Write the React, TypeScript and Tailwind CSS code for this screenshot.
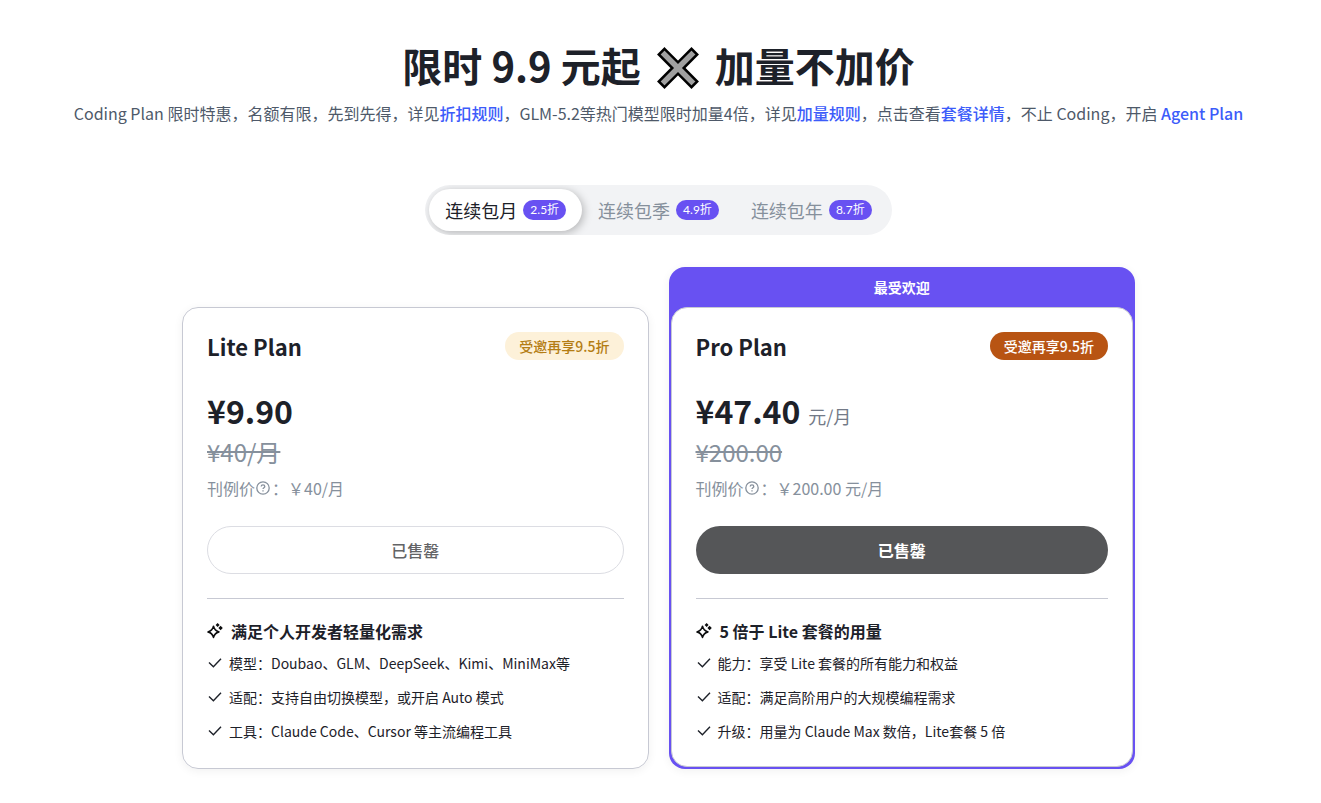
import { useState } from "react";
import clsx from "clsx";

const periods = [
  { id: "month", label: "连续包月", discount: "2.5折" },
  { id: "quarter", label: "连续包季", discount: "4.9折" },
  { id: "year", label: "连续包年", discount: "8.7折" },
];

const plans = [
  {
    name: "Lite Plan",
    price: "¥9.90",
    unit: "",
    original: "¥40/月",
    listPrice: "￥40/月",
    summary: "满足个人开发者轻量化需求",
    features: [
      "模型：Doubao、GLM、DeepSeek、Kimi、MiniMax等",
      "适配：支持自由切换模型，或开启 Auto 模式",
      "工具：Claude Code、Cursor 等主流编程工具",
    ],
    popular: false,
  },
  {
    name: "Pro Plan",
    price: "¥47.40",
    unit: "元/月",
    original: "¥200.00",
    listPrice: "￥200.00 元/月",
    summary: "5 倍于 Lite 套餐的用量",
    features: [
      "能力：享受 Lite 套餐的所有能力和权益",
      "适配：满足高阶用户的大规模编程需求",
      "升级：用量为 Claude Max 数倍，Lite套餐 5 倍",
    ],
    popular: true,
  },
];

type Plan = (typeof plans)[number];

function CrossIcon() {
  return (
    <svg viewBox="0 0 42 42" className="size-[42px]" aria-hidden="true">
      <path
        d="M7.5 1.8 21 15.3 34.5 1.8 40.2 7.5 26.7 21 40.2 34.5 34.5 40.2 21 26.7 7.5 40.2 1.8 34.5 15.3 21 1.8 7.5Z"
        fill="#a0a0a0"
        stroke="#000"
        strokeWidth="2.5"
      />
    </svg>
  );
}

function HelpIcon() {
  return (
    <svg
      viewBox="0 0 14 14"
      className="mr-0.5 ml-px size-3.5"
      fill="none"
      stroke="currentColor"
      strokeWidth="1.3"
      aria-hidden="true"
    >
      <circle cx="7" cy="7" r="6.2" />
      <path d="M5.2 5.6c0-1 .8-1.7 1.8-1.7s1.8.7 1.8 1.6c0 1.2-1.8 1.3-1.8 2.6" />
      <path d="M7 9.3v1.2" />
    </svg>
  );
}

function SparkleIcon() {
  return (
    <svg viewBox="0 0 16 16" className="size-4 shrink-0" aria-hidden="true">
      <path
        d="M6.5 3.2Q7.3 7.6 12 8.9 7.6 10 6.5 14.4 5.4 10 1 8.9 5.7 7.6 6.5 3.2Z"
        fill="none"
        stroke="#0c0d0e"
        strokeWidth="1.6"
        strokeLinejoin="round"
      />
      <path d="M10.6 0 12.6 2 10.6 4 8.6 2ZM13.6 2.8 15.8 5 13.6 7.2 11.4 5Z" fill="#0c0d0e" />
    </svg>
  );
}

function CheckIcon() {
  return (
    <svg viewBox="0 0 16 16" className="size-4 shrink-0" fill="none" stroke="#1d2129" strokeWidth="1.4" aria-hidden="true">
      <path d="M2 7.4 6.4 11.8 14 3.8" />
    </svg>
  );
}

function PlanBody({ plan }: { plan: Plan }) {
  return (
    <div className="flex-1 rounded-2xl border border-[#c7c9d3] bg-white px-6 pt-6 pb-[23px]">
      <div className="flex items-center justify-between">
        <h2 className="text-[22px] leading-7 font-semibold">{plan.name}</h2>
        <span
          className={clsx(
            "rounded-full px-3.5 text-sm leading-7 font-medium",
            plan.popular ? "bg-[#b85413] text-white" : "bg-[#fdf1d9] text-[#b47d14]",
          )}
        >
          受邀再享9.5折
        </span>
      </div>

      <p className="mt-[30px] flex items-baseline gap-2">
        <span className="text-[32px] leading-10 font-semibold">{plan.price}</span>
        {plan.unit && <span className="text-lg leading-7 text-[#737a87]">{plan.unit}</span>}
      </p>
      <p className="mt-1.5 text-2xl leading-8 text-[#86909c] line-through">{plan.original}</p>
      <div className="mt-2 flex items-center leading-6 text-[#86909c]">
        刊例价
        <HelpIcon />
        <span>：{plan.listPrice}</span>
      </div>

      <button
        type="button"
        className={clsx(
          "mt-[26px] h-12 w-full rounded-full",
          plan.popular ? "bg-[#555658] font-semibold text-white" : "border border-[#dcdde3] font-medium text-[#636466]",
        )}
      >
        已售罄
      </button>

      <hr className="mt-6 border-[#c7c9d3]" />

      <h3 className="mt-5 flex items-center gap-2 leading-6 font-semibold">
        <SparkleIcon />
        {plan.summary}
      </h3>
      <ul className="mt-2 flex flex-col gap-2.5 text-sm leading-6">
        {plan.features.map((feature) => (
          <li key={feature} className="flex items-center gap-1.5">
            <CheckIcon />
            {feature}
          </li>
        ))}
      </ul>
    </div>
  );
}

export default function App() {
  const [period, setPeriod] = useState("month");

  return (
    <main className="min-h-screen bg-white pr-1 pb-8 font-['Noto_Sans_CJK_SC',sans-serif] text-base text-[#1d2129]">
      <header className="pt-[41px] text-center">
        <h1 className="flex items-end justify-center gap-4 text-[40px] leading-12 font-semibold">
          <span>限时 9.9 元起</span>
          <CrossIcon />
          <span>加量不加价</span>
        </h1>
        <p className="mt-3 leading-6 text-[#4e5969]">
          Coding Plan 限时特惠，名额有限，先到先得，详见
          <a href="#discount" className="font-medium text-[#3c5cfa]">折扣规则</a>
          ，GLM-5.2等热门模型限时加量4倍，详见
          <a href="#bonus" className="font-medium text-[#3c5cfa]">加量规则</a>
          ，点击查看
          <a href="#plans" className="font-medium text-[#3c5cfa]">套餐详情</a>
          ，不止 Coding，开启{" "}
          <a href="#agent-plan" className="font-medium text-[#3c5cfa]">Agent Plan</a>
        </p>
      </header>

      <div className="mt-15 flex justify-center">
        <div role="tablist" className="flex overflow-hidden rounded-full bg-[#f2f3f5] p-1">
          {periods.map((item) => (
            <button
              key={item.id}
              type="button"
              role="tab"
              aria-selected={period === item.id}
              onClick={() => setPeriod(item.id)}
              className={clsx(
                "flex h-[42px] items-center gap-1.5 rounded-full px-4 text-lg",
                period === item.id ? "bg-white shadow-[2px_2px_8px_rgba(0,0,0,0.25)]" : "text-[#86909c]",
              )}
            >
              {item.label}
              <span className="rounded-full bg-[#6851f2] px-[7px] font-['Lato','Noto_Sans_CJK_SC',sans-serif] text-xs leading-5 text-white">
                {item.discount}
              </span>
            </button>
          ))}
        </div>
      </div>

      <section id="plans" className="mx-auto mt-8 grid max-w-[953px] grid-cols-2 gap-5">
        {plans.map((plan) =>
          plan.popular ? (
            <div
              key={plan.name}
              className="flex flex-col rounded-2xl bg-[#6851f2] px-0.5 pb-0.5 shadow-[0_2px_10px_rgba(0,0,0,0.06)]"
            >
              <p className="py-2.5 text-center text-sm leading-5 font-semibold text-white">最受欢迎</p>
              <PlanBody plan={plan} />
            </div>
          ) : (
            <div key={plan.name} className="flex pt-10">
              <div className="flex flex-1 rounded-2xl shadow-[0_2px_10px_rgba(0,0,0,0.06)]">
                <PlanBody plan={plan} />
              </div>
            </div>
          ),
        )}
      </section>
    </main>
  );
}
